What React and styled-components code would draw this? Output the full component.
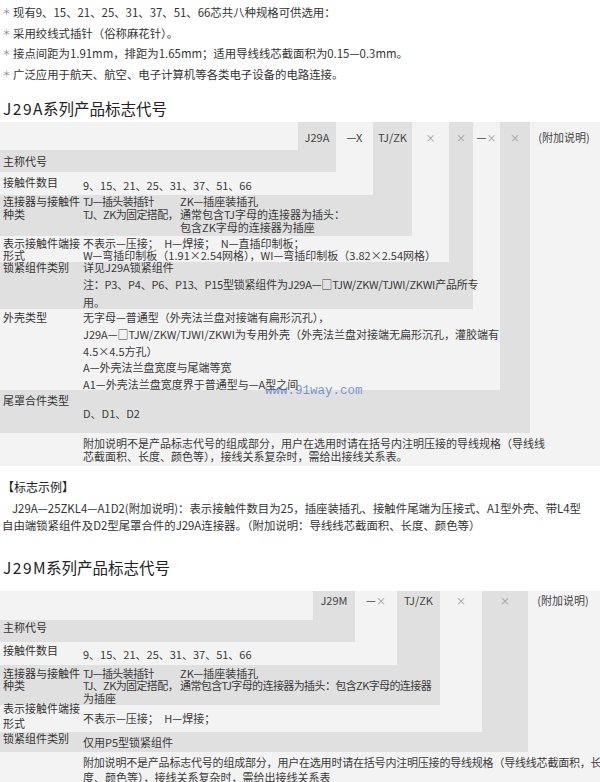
import React from "react";
import styled, { createGlobalStyle } from "styled-components";

const DARK = "#e0e0e0";
const LIGHT = "#f3f3f3";

const GlobalStyle = createGlobalStyle`
  html, body {
    margin: 0;
    background: #ffffff;
  }
  body {
    font-family: "Noto Sans CJK SC", "Liberation Sans", sans-serif;
    font-size: 11px;
    color: #333333;
  }
`;

const Page = styled.div`
  width: 600px;
  padding-top: 2px;
  overflow: hidden;
`;

const Features = styled.ul`
  list-style: none;
  margin: 0;
  padding: 0 0 0 2px;
`;

const Feature = styled.li`
  display: flex;
  font-size: 11.4px;
  line-height: 20.5px;
  white-space: nowrap;
  &::before {
    content: "＊";
    flex: none;
    width: 11px;
    font-size: 9px;
    color: #888888;
  }
`;

const Title = styled.h3`
  margin: ${(p) => p.$mt}px 0 ${(p) => p.$mb}px;
  padding-left: 3px;
  font-size: 15.5px;
  font-weight: normal;
  line-height: 20px;
  color: #222222;
`;

const Series = styled.span`
  letter-spacing: 1.5px;
  margin-right: -1px;
`;

const Diagram = styled.div`
  position: relative;
  display: grid;
  grid-template-columns: ${(p) => p.$cols.map((c) => c + "px").join(" ")};
  grid-template-rows: ${(p) => p.$rows.map((r) => r + "px").join(" ")};
  background: ${LIGHT};
  overflow: hidden;
`;

const CodeCol = styled.div`
  grid-column: ${(p) => p.$col};
  grid-row: 1 / ${(p) => p.$end};
  padding-top: ${(p) => p.$top}px;
  background: ${(p) => (p.$dark ? DARK : LIGHT)};
  text-align: center;
  line-height: 17px;
  color: #444444;
  white-space: nowrap;
`;

const Mult = styled.span`
  color: #9a9a9a;
  font-size: 10px;
`;

const Band = styled.div`
  grid-row: ${(p) => p.$row};
  grid-column: 1 / ${(p) => p.$end};
  display: flex;
  background: ${(p) => (p.$dark ? DARK : LIGHT)};
  white-space: nowrap;
`;

const Label = styled.div`
  flex: none;
  width: 80px;
  padding-left: 3px;
  margin-top: ${(p) => p.$top}px;
  line-height: ${(p) => p.$lh}px;
  color: #333333;
`;

const Body = styled.div`
  margin-top: ${(p) => p.$top}px;
  line-height: ${(p) => p.$lh}px;
  color: #3a3a3a;
`;

const Cell = styled.span`
  display: inline-block;
  width: 97px;
  letter-spacing: -0.6px;
`;

const Tight = styled.span`
  letter-spacing: ${(p) => p.$ls}px;
`;

const Watermark = styled.div`
  position: absolute;
  left: 265px;
  top: 262px;
  font-family: "Liberation Mono", monospace;
  font-size: 12.5px;
  line-height: 14px;
  color: rgba(80, 120, 200, 0.75);
`;

const ExampleTitle = styled.div`
  margin: 11px 0 0 2px;
  font-size: 12px;
  line-height: 20px;
  color: #222222;
`;

const ExampleText = styled.p`
  margin: 2.5px 0 0;
  padding-left: 2px;
  font-size: 11.4px;
  line-height: 17px;
  text-indent: 10px;
  white-space: nowrap;
  color: #333333;
`;

const x = <Mult>×</Mult>;

const j29a = {
  cols: [298, 38, 37, 39, 37, 24, 27, 30, 68],
  rows: [28, 22, 23, 41, 26, 47, 81, 43, 33],
  headTop: 6.5,
  codes: ["J29A", "—X", "TJ/ZK", x, x, <>—{x}</>, x, "(附加说明)"],
  bands: [
    { label: "主称代号", lt: 2.5 },
    { label: "接触件数目", lt: 1.5, bt: 4.5, body: "9、15、21、25、31、37、51、66" },
    {
      label: <>连接器与接触件<br />种类</>,
      lh: 13,
      lt: 0,
      bt: 0,
      body: (
        <>
          <Cell>TJ—插头装插针</Cell>ZK—插座装插孔<br />
          <Cell>TJ、ZK为固定搭配，</Cell>通常包含TJ字母的连接器为插头：<br />
          <Cell />包含ZK字母的连接器为插座
        </>
      ),
    },
    {
      label: <>表示接触件端接<br />形式</>,
      lh: 12.5,
      lt: 0.5,
      bt: 0.5,
      body: (
        <>
          不表示—压接；　H—焊接；　N—直插印制板；<br />
          W—弯插印制板（1.91×2.54网格），WI—弯插印制板（3.82×2.54网格）
        </>
      ),
    },
    {
      label: "锁紧组件类别",
      lt: -3.5,
      bt: -3.5,
      blh: 17.5,
      body: (
        <>
          详见J29A锁紧组件<br />
          <Tight $ls={-0.2}>注：P3、P4、P6、P13、P15型锁紧组件为J29A—□TJW/ZKW/TJWI/ZKWI产品所专</Tight>
          <br />
          用。
        </>
      ),
    },
    {
      label: "外壳类型",
      lt: 0,
      bt: 0,
      blh: 16.8,
      body: (
        <>
          无字母—普通型（外壳法兰盘对接端有扁形沉孔），<br />
          J29A—□TJW/ZKW/TJWI/ZKWI为专用外壳（外壳法兰盘对接端无扁形沉孔，灌胶端有<br />
          4.5×4.5方孔）<br />
          A—外壳法兰盘宽度与尾端等宽<br />
          A1—外壳法兰盘宽度界于普通型与—A型之间
        </>
      ),
    },
    { label: "尾罩合件类型", lt: 1.5, bt: 14.5, body: "D、D1、D2" },
    {
      label: "",
      lt: 0,
      bt: 3.5,
      blh: 13,
      body: (
        <>
          附加说明不是产品标志代号的组成部分，用户在选用时请在括号内注明压接的导线规格（导线线<br />
          芯截面积、长度、颜色等），接线关系复杂时，需给出接线关系表。
        </>
      ),
    },
  ],
};

const j29m = {
  cols: [313, 42, 42, 43, 42, 46, 70],
  rows: [29, 22, 23, 40, 27, 20, 35],
  headTop: 0.5,
  codes: ["J29M", <>—{x}</>, "TJ/ZK", x, x, "(附加说明)"],
  bands: [
    { label: "主称代号", lt: -1.5 },
    { label: "接触件数目", lt: -0.5, bt: 3.5, body: "9、15、21、25、31、37、51、66" },
    {
      label: <>连接器与接触件<br />种类</>,
      lh: 12.5,
      lt: 1.75,
      bt: 1.75,
      body: (
        <>
          <Cell>TJ—插头装插针</Cell>ZK—插座装插孔<br />
          <Cell>TJ、ZK为固定搭配，</Cell>
          <Tight $ls={-0.6}>通常包含TJ字母的连接器为插头：包含ZK字母的连接器</Tight>
          <br />
          为插座
        </>
      ),
    },
    {
      label: <>表示接触件端接<br />形式</>,
      lh: 15,
      lt: -4.5,
      bt: 4.5,
      blh: 17,
      body: "不表示—压接；　H—焊接；",
    },
    { label: "锁紧组件类别", lt: -2.5, bt: 1.5, body: "仅用P5型锁紧组件" },
    {
      label: "",
      lt: 0,
      bt: 2.5,
      blh: 15,
      body: (
        <>
          <Tight $ls={-0.2}>
            附加说明不是产品标志代号的组成部分，用户在选用时请在括号内注明压接的导线规格（导线线芯截面积，长
          </Tight>
          <br />
          度、颜色等），接线关系复杂时，需给出接线关系表
        </>
      ),
    },
  ],
};

const CodeTable = ({ spec, children }) => (
  <Diagram $cols={spec.cols} $rows={spec.rows}>
    {spec.codes.map((code, i) => (
      <CodeCol key={"c" + i} $col={i + 2} $end={i + 3} $top={spec.headTop} $dark={i % 2 === 0}>
        {code}
      </CodeCol>
    ))}
    {spec.bands.map((b, i) => (
      <Band key={"b" + i} $row={i + 2} $end={i + 3} $dark={i % 2 === 0}>
        <Label $top={b.lt} $lh={b.lh || 17}>
          {b.label}
        </Label>
        {b.body && (
          <Body $top={b.bt} $lh={b.blh || b.lh || 17}>
            {b.body}
          </Body>
        )}
      </Band>
    ))}
    {children}
  </Diagram>
);

export default function App() {
  return (
    <Page>
      <GlobalStyle />
      <Features>
        <Feature>现有9、15、21、25、31、37、51、66芯共八种规格可供选用：</Feature>
        <Feature>采用绞线式插针（俗称麻花针）。</Feature>
        <Feature>接点间距为1.91mm，排距为1.65mm；适用导线线芯截面积为0.15—0.3mm。</Feature>
        <Feature>广泛应用于航天、航空、电子计算机等各类电子设备的电路连接。</Feature>
      </Features>

      <Title $mt={14} $mb={4}>
        <Series>J29A</Series>系列产品标志代号
      </Title>
      <CodeTable spec={j29a}>
        <Watermark>www.91way.com</Watermark>
      </CodeTable>

      <ExampleTitle>【标志示例】</ExampleTitle>
      <ExampleText>
        J29A—25ZKL4—A1D2(附加说明)：表示接触件数目为25，插座装插孔、接触件尾端为压接式、A1型外壳、带L4型
        <br />
        自由端锁紧组件及D2型尾罩合件的J29A连接器。（附加说明：导线线芯截面积、长度、颜色等）
      </ExampleText>

      <Title $mt={23.5} $mb={14}>
        <Series>J29M</Series>系列产品标志代号
      </Title>
      <CodeTable spec={j29m} />
    </Page>
  );
}
